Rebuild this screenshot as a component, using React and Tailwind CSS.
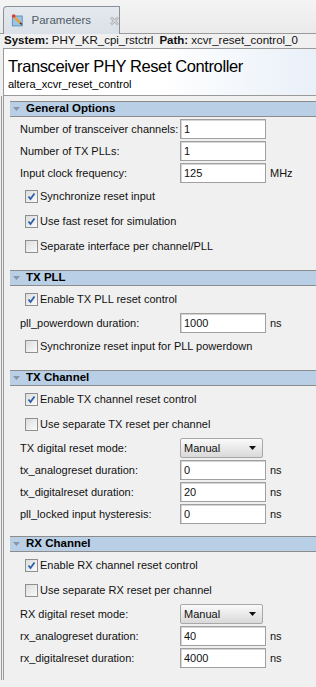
import React from 'react';

const FONT = { fontFamily: '"Liberation Sans", Arial, sans-serif' };

function Checkbox({ checked }) {
  return (
    <div className="w-[13px] h-[13px] border border-[#8e8f8f] bg-gradient-to-br from-[#dcdcdc] to-[#fbfbfb] flex items-center justify-center shrink-0">
      {checked && (
        <svg width="9" height="9" viewBox="0 0 9 9">
          <path d="M1.5 4.5 L3.5 7 L7.5 1.5" fill="none" stroke="#2c5fa8" strokeWidth="1.8" />
        </svg>
      )}
    </div>
  );
}

function CheckRow({ label, checked }) {
  return (
    <div className="h-[25px] flex items-center pl-[15px] gap-[2px]">
      <Checkbox checked={checked} />
      <span>{label}</span>
    </div>
  );
}

function FieldRow({ label, value, unit }) {
  return (
    <div className="h-[22px] flex items-center pl-[10px]">
      <span className="w-[160px] shrink-0 whitespace-nowrap">{label}</span>
      <div className="w-[86px] h-[20px] border border-[#a0a0a0] bg-white shadow-[inset_1px_1px_0_#d4d4d4] flex items-center pl-[3px]">
        {value}
      </div>
      {unit && <span className="ml-[4px]">{unit}</span>}
    </div>
  );
}

function SelectRow({ label, value }) {
  return (
    <div className="h-[22px] flex items-center pl-[10px]">
      <span className="w-[160px] shrink-0 whitespace-nowrap">{label}</span>
      <div className="w-[83px] h-[20px] border border-[#a8a8a8] rounded-[2px] bg-gradient-to-b from-[#fafafa] to-[#d9d9d9] flex items-center justify-between pl-[3px] pr-[6px]">
        <span>{value}</span>
        <svg width="7" height="4" viewBox="0 0 7 4">
          <path d="M0 0 L7 0 L3.5 4 Z" fill="#111" />
        </svg>
      </div>
    </div>
  );
}

function Section({ title, children }) {
  return (
    <div>
      <div className="h-[16px] border-y border-[#8c8c8c] bg-[#b8cfe5] flex items-center">
        <svg width="8" height="5" viewBox="0 0 8 5" className="ml-[3px]">
          <path d="M0 0 L7 0 L3.5 4 Z" fill="#8a96a4" />
        </svg>
        <span className="ml-[5px] font-bold text-[11.5px] text-black">{title}</span>
      </div>
      <div className="pt-[1px] pb-[11px]">{children}</div>
    </div>
  );
}

export default function App() {
  return (
    <div className="w-[316px] h-[687px] bg-[#f0f0f0] overflow-hidden text-[11px] text-[#111]" style={FONT}>
      {/* Tab bar */}
      <div className="h-[34px] flex items-end bg-gradient-to-b from-[#f4f4f4] to-[#eaeaea] border-b border-[#9a9a9a]">
        <div className="ml-[3px] w-[117px] h-[28px] -mb-[1px] border border-b-0 border-[#8a9099] rounded-tl-[4px] bg-gradient-to-b from-[#e4e9ef] to-[#dbe1e8] flex items-center">
          <svg width="15" height="15" viewBox="0 0 15 15" className="ml-[7px]">
            <rect x="1" y="2" width="12" height="12" fill="#5d8fb8" />
            <rect x="2" y="3" width="10" height="10" fill="#9cc3e3" />
            <path d="M4 4 L11 11" stroke="#e9a23b" strokeWidth="2.5" />
            <path d="M10 10 L12 12" stroke="#333" strokeWidth="1.5" />
            <circle cx="3" cy="2.5" r="2" fill="#e03a2e" />
          </svg>
          <span className="ml-[7px] text-[#505a66] text-[11.5px]">Parameters</span>
          <svg width="10" height="10" viewBox="0 0 10 10" className="ml-[19px]">
            <path d="M1 1 L9 9 M9 1 L1 9" stroke="#b0b4b8" strokeWidth="3" />
            <path d="M1 1 L9 9 M9 1 L1 9" stroke="#eef0f2" strokeWidth="1" />
          </svg>
        </div>
      </div>

      {/* System / Path */}
      <div className="h-[14px] flex items-center pl-[4px] whitespace-nowrap text-[11.5px]">
        <span className="font-bold">System:</span>
        <span className="ml-[3px]">PHY_KR_cpi_rstctrl</span>
        <span className="font-bold ml-[6px]">Path:</span>
        <span className="ml-[3px]">xcvr_reset_control_0</span>
      </div>

      {/* Header */}
      <div className="h-[48px] border-t border-l border-b border-[#9a9a9a] ml-[3px] bg-gradient-to-r from-white via-white to-[#e9f0f8] pl-[4px] pt-[5px]">
        <div className="text-[16.5px] tracking-[-0.4px] leading-[24px] text-black">Transceiver PHY Reset Controller</div>
        <div className="text-[11px] leading-[13px] text-black">altera_xcvr_reset_control</div>
      </div>

      {/* Body */}
      <div className="flex">
        <div className="w-[2px] border-l border-[#9a9a9a] ml-[1px]" />
        <div className="flex-1 border-l border-[#9a9a9a] pl-[6px] pt-[5px]">
          <Section title="General Options">
            <FieldRow label="Number of transceiver channels:" value="1" />
            <FieldRow label="Number of TX PLLs:" value="1" />
            <FieldRow label="Input clock frequency:" value="125" unit="MHz" />
            <CheckRow label="Synchronize reset input" checked />
            <CheckRow label="Use fast reset for simulation" checked />
            <CheckRow label="Separate interface per channel/PLL" />
          </Section>
          <Section title="TX PLL">
            <CheckRow label="Enable TX PLL reset control" checked />
            <FieldRow label="pll_powerdown duration:" value="1000" unit="ns" />
            <CheckRow label="Synchronize reset input for PLL powerdown" />
          </Section>
          <Section title="TX Channel">
            <CheckRow label="Enable TX channel reset control" checked />
            <CheckRow label="Use separate TX reset per channel" />
            <SelectRow label="TX digital reset mode:" value="Manual" />
            <FieldRow label="tx_analogreset duration:" value="0" unit="ns" />
            <FieldRow label="tx_digitalreset duration:" value="20" unit="ns" />
            <FieldRow label="pll_locked input hysteresis:" value="0" unit="ns" />
          </Section>
          <Section title="RX Channel">
            <CheckRow label="Enable RX channel reset control" checked />
            <CheckRow label="Use separate RX reset per channel" />
            <SelectRow label="RX digital reset mode:" value="Manual" />
            <FieldRow label="rx_analogreset duration:" value="40" unit="ns" />
            <FieldRow label="rx_digitalreset duration:" value="4000" unit="ns" />
          </Section>
        </div>
      </div>
    </div>
  );
}
